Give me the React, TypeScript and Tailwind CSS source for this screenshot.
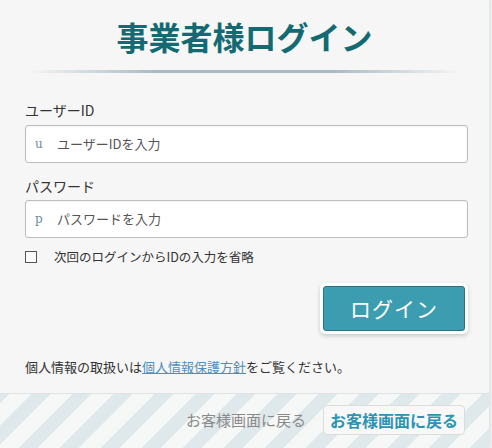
import React from "react";

export default function App() {
  const jp = { fontFamily: '"Noto Sans CJK JP", "Noto Sans", sans-serif' };
  return (
    <div className="w-[492px] h-[448px] bg-[#eef0f1] overflow-hidden" style={jp}>
      <div className="w-[489px] h-[448px] bg-[#f6f6f6] shadow-[1px_0_3px_rgba(0,0,0,0.08)] flex flex-col">
        <div className="pt-[15px] h-[58px] flex justify-center">
          <h1 className="text-[32px] leading-[42px] font-bold text-[#146a72] tracking-[0px]">事業者様ログイン</h1>
        </div>
        <div className="mx-[27px] mt-[12px] h-[3px] bg-[linear-gradient(to_right,rgba(168,184,192,0),#a9bac2_30%,#a9bac2_70%,rgba(168,184,192,0))]" />
        <div className="pl-[25px] pr-[21px] flex flex-col">
          <div className="mt-[27px] text-[14px] leading-[20px] text-[#333]">ユーザーID</div>
          <div className="mt-[5px] h-[38px] bg-white border border-[#bdbdbd] rounded-[3px] flex items-center shadow-[inset_0_1px_2px_rgba(0,0,0,0.05)]">
            <span className="ml-[9px] w-[22px] text-[12px] text-[#6a8f9a]" style={{ fontFamily: '"DejaVu Serif", serif' }}>u</span>
            <span className="text-[13px] text-[#555]">ユーザーIDを入力</span>
          </div>
          <div className="mt-[13px] text-[14px] leading-[20px] text-[#333]">パスワード</div>
          <div className="mt-[4px] h-[38px] bg-white border border-[#bdbdbd] rounded-[3px] flex items-center shadow-[inset_0_1px_2px_rgba(0,0,0,0.05)]">
            <span className="ml-[9px] w-[22px] text-[12px] text-[#6a8f9a]" style={{ fontFamily: '"DejaVu Serif", serif' }}>p</span>
            <span className="text-[13px] text-[#555]">パスワードを入力</span>
          </div>
          <div className="mt-[10px] flex items-center h-[18px]">
            <span className="w-[12px] h-[12px] border border-[#555] bg-white" />
            <span className="ml-[17px] text-[12.5px] text-[#333]">次回のログインからIDの入力を省略</span>
          </div>
          <div className="mt-[17px] flex justify-end">
            <div className="p-[3px] bg-white rounded-[5px] shadow-[0_2px_4px_rgba(0,0,0,0.18)]">
              <div className="w-[142px] h-[45px] bg-[#3d9db0] border border-[#2a7482] rounded-[3px] flex items-center justify-center text-white text-[21px] tracking-[1px]">ログイン</div>
            </div>
          </div>
          <div className="mt-[23px] text-[13px] leading-[20px] text-[#333]">
            個人情報の取扱いは<span className="text-[#4f8fbf] underline">個人情報保護方針</span>をご覧ください。
          </div>
        </div>
        <div className="mt-[16px] flex-1 border-t border-[#dde3e5] bg-[repeating-linear-gradient(-45deg,#dfe8ea_0px,#dfe8ea_14px,#f6f7f7_14px,#f6f7f7_29px)] flex items-center justify-end pr-[24px] pb-[2px]">
          <span className="text-[15px] text-[#8a8a8a] mr-[17px]">お客様画面に戻る</span>
          <div className="h-[30px] px-[6px] bg-[#f8f8f8] border border-[#dcdcdc] rounded-[4px] flex items-center text-[16px] font-bold text-[#2b94b4]">お客様画面に戻る</div>
        </div>
      </div>
    </div>
  );
}
